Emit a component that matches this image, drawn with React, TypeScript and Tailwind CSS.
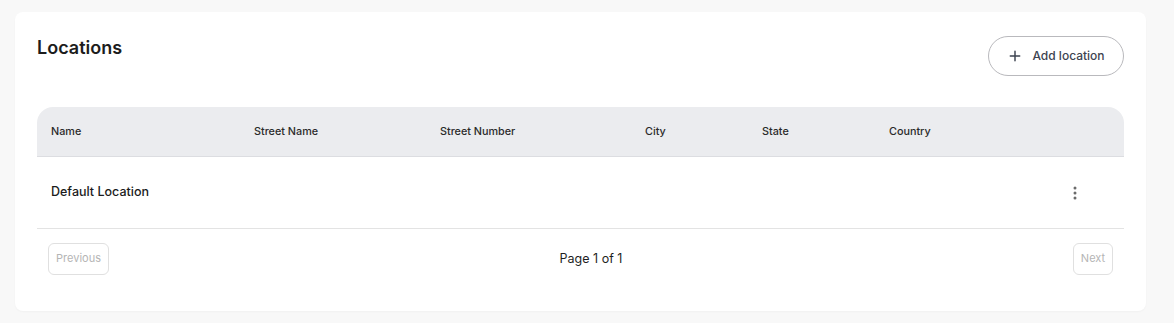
import React from "react";

const cols = [
  { label: "Name", w: "w-[203px]" },
  { label: "Street Name", w: "w-[186px]" },
  { label: "Street Number", w: "w-[205px]" },
  { label: "City", w: "w-[117px]" },
  { label: "State", w: "w-[127px]" },
  { label: "Country", w: "" },
];

export default function App() {
  return (
    <div
      className="min-h-[323px] w-full bg-[#f8f8f8] pt-3 pl-[15px] pr-[28px] pb-3"
      style={{ fontFamily: "Inter, 'Noto Sans', sans-serif" }}
    >
      <div className="rounded-lg bg-white px-[22px] pt-6 pb-9 shadow-[0_1px_2px_rgba(0,0,0,0.03)]">
        <div className="flex items-start justify-between">
          <h1 className="-mt-[2px] text-[18px] font-semibold leading-7 text-[#1c1c1c]">Locations</h1>
          <button className="flex h-10 w-[136px] items-center justify-center gap-[11px] rounded-full border border-[#b9b9bd] pl-[2px] text-[12px] font-medium text-[#3d4350]">
            <svg width="12" height="12" viewBox="0 0 14 14" fill="none" stroke="#3d4350" strokeWidth="1.7" strokeLinecap="round">
              <path d="M7 1.5v11M1.5 7h11" />
            </svg>
            Add location
          </button>
        </div>

        <div className="mt-[31px]">
          <div className="flex h-[50px] items-center rounded-t-2xl border-b border-[#dcdde1] bg-[#ebecef] pl-[14px] pt-[2px] text-[10.8px] font-medium text-[#2a2a2a]">
            {cols.map((c) => (
              <div key={c.label} className={`${c.w} shrink-0`}>
                {c.label}
              </div>
            ))}
          </div>
          <div className="flex h-[72px] items-center border-b border-[#e3e3e3] pl-[14px] pr-[47px]">
            <div className="flex-1 text-[12.5px] font-medium text-[#1c1c1c]">Default Location</div>
            <svg width="4" height="14" viewBox="0 0 4 14" fill="#6b6b6b">
              <circle cx="2" cy="2" r="1.5" />
              <circle cx="2" cy="7" r="1.5" />
              <circle cx="2" cy="12" r="1.5" />
            </svg>
          </div>
          <div className="flex items-center justify-between px-[11px] pt-[14px]">
            <button className="h-[32px] w-[61px] rounded-md border border-[#e0e0e0] pb-[2px] text-[11px] text-[#b5b5b5]">
              Previous
            </button>
            <span className="text-[12.5px] text-[#1f1f1f]">Page 1 of 1</span>
            <button className="h-[32px] w-[40px] rounded-md border border-[#e0e0e0] pb-[2px] text-[11px] text-[#b5b5b5]">
              Next
            </button>
          </div>
        </div>
      </div>
    </div>
  );
}
